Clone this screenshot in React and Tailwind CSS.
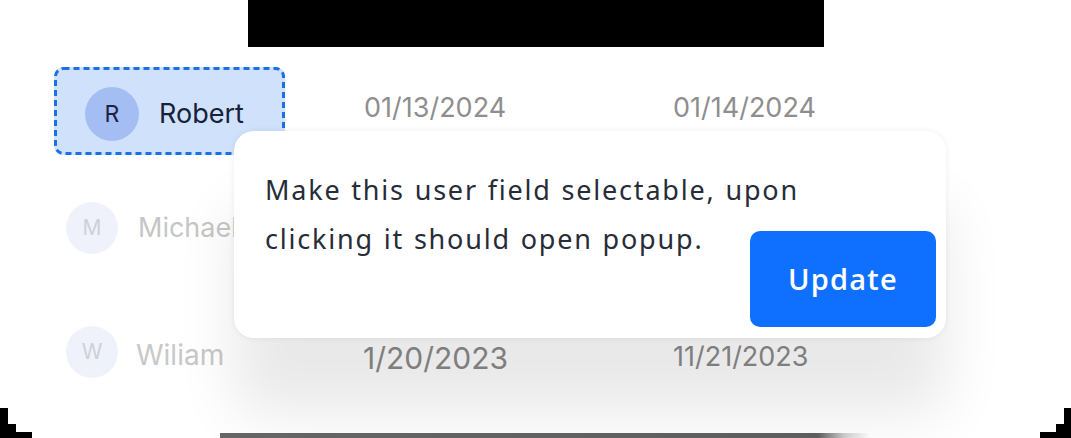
import React from "react";

function DashedChip({ children }) {
  return (
    <div className="relative flex h-[88px] w-[231px] items-center rounded-[9px] bg-[#cfe1fb] pl-[31px] pt-[6px]">
      <svg className="pointer-events-none absolute inset-0" width="231" height="88" viewBox="0 0 231 88">
        <rect x="1.5" y="1.5" width="228" height="85" rx="8" ry="8" fill="none" stroke="#1a70e6" strokeWidth="3" strokeDasharray="6 4" />
      </svg>
      {children}
    </div>
  );
}

export default function App() {
  const inter = { fontFamily: "Inter, 'Liberation Sans', sans-serif" };
  return (
    <div className="relative h-[438px] w-[1071px] overflow-hidden bg-white" style={inter}>
      {/* top black bar */}
      <div className="ml-[248px] h-[47px] w-[576px] bg-black" />

      {/* table */}
      <div className="mt-[20px] flex flex-col">
        {/* Row 1 */}
        <div className="flex h-[88px] items-center">
          <div className="w-[364px] pl-[54px]">
            <DashedChip>
              <div className="flex h-[54px] w-[54px] items-center justify-center rounded-full bg-[#a4bdf3] text-[23px] text-[#1a2440]">R</div>
              <span className="ml-[20px] text-[27px] text-[#17213a]">Robert</span>
            </DashedChip>
          </div>
          <div className="w-[309px] pb-[6px] text-[27px] text-[#8e8e8e]">01/13/2024</div>
          <div className="pb-[6px] text-[27px] text-[#8e8e8e]">01/14/2024</div>
        </div>
        {/* Row 2 */}
        <div className="mt-[47px] flex h-[52px] items-center">
          <div className="flex w-[364px] items-center pl-[66px]">
            <div className="flex h-[52px] w-[52px] items-center justify-center rounded-full bg-[#eff2fb] text-[21px] text-[#cdd0d9]">M</div>
            <span className="ml-[20px] text-[27px] text-[#c6c6c6]">Michael</span>
          </div>
        </div>
        {/* Row 3 */}
        <div className="mt-[72px] flex h-[52px] items-center">
          <div className="flex w-[363px] items-center pl-[66px]">
            <div className="flex h-[52px] w-[52px] items-center justify-center rounded-full bg-[#eff2fb] text-[21px] text-[#cdd0d9]">W</div>
            <span className="ml-[18px] pt-[6px] text-[28px] text-[#c8c8c8]">Wiliam</span>
          </div>
          <div className="w-[310px] pt-[12px] text-[30px] text-[#8a8a8a]">1/20/2023</div>
          <div className="pt-[10px] text-[27px] text-[#8a8a8a]">11/21/2023</div>
        </div>
      </div>

      {/* popup */}
      <div className="absolute left-[234px] top-[131px] h-[207px] w-[712px] rounded-[20px] bg-white shadow-[0_0_6px_rgba(0,0,0,0.07),0_75px_60px_rgba(0,0,0,0.09)]">
        <p
          className="absolute left-[31px] top-[34px] w-[600px] text-[27px] leading-[49px] tracking-[1.8px] text-[#272c38]"
          style={{ fontFamily: "'Noto Sans', 'Open Sans', sans-serif", wordSpacing: "1px" }}
        >
          Make this user field selectable, upon
          <br />
          clicking it should open popup.
        </p>
        <button
          className="absolute left-[516px] top-[100px] flex h-[96px] w-[186px] items-center justify-center rounded-[10px] bg-[#0f70ff] text-[29px] font-semibold tracking-[1.2px] text-white"
          style={{ fontFamily: "'Open Sans', Inter, sans-serif" }}
        >
          Update
        </button>
      </div>

      {/* bottom noisy band */}
      <div className="absolute bottom-0 left-[220px] h-[5px] w-[650px] bg-[linear-gradient(to_right,#666_0%,#5e5e5e_92%,rgba(170,170,170,0.6)_96%,transparent_100%)]" />

      {/* corner stairs left */}
      <div className="absolute bottom-0 left-0 h-[30px] w-[8px] bg-black" />
      <div className="absolute bottom-0 left-0 h-[14px] w-[16px] bg-black" />
      <div className="absolute bottom-0 left-0 h-[6px] w-[32px] bg-black" />
      {/* corner stairs right */}
      <div className="absolute bottom-0 right-0 h-[30px] w-[7px] bg-black" />
      <div className="absolute bottom-0 right-0 h-[14px] w-[15px] bg-black" />
      <div className="absolute bottom-0 right-0 h-[6px] w-[31px] bg-black" />
    </div>
  );
}
